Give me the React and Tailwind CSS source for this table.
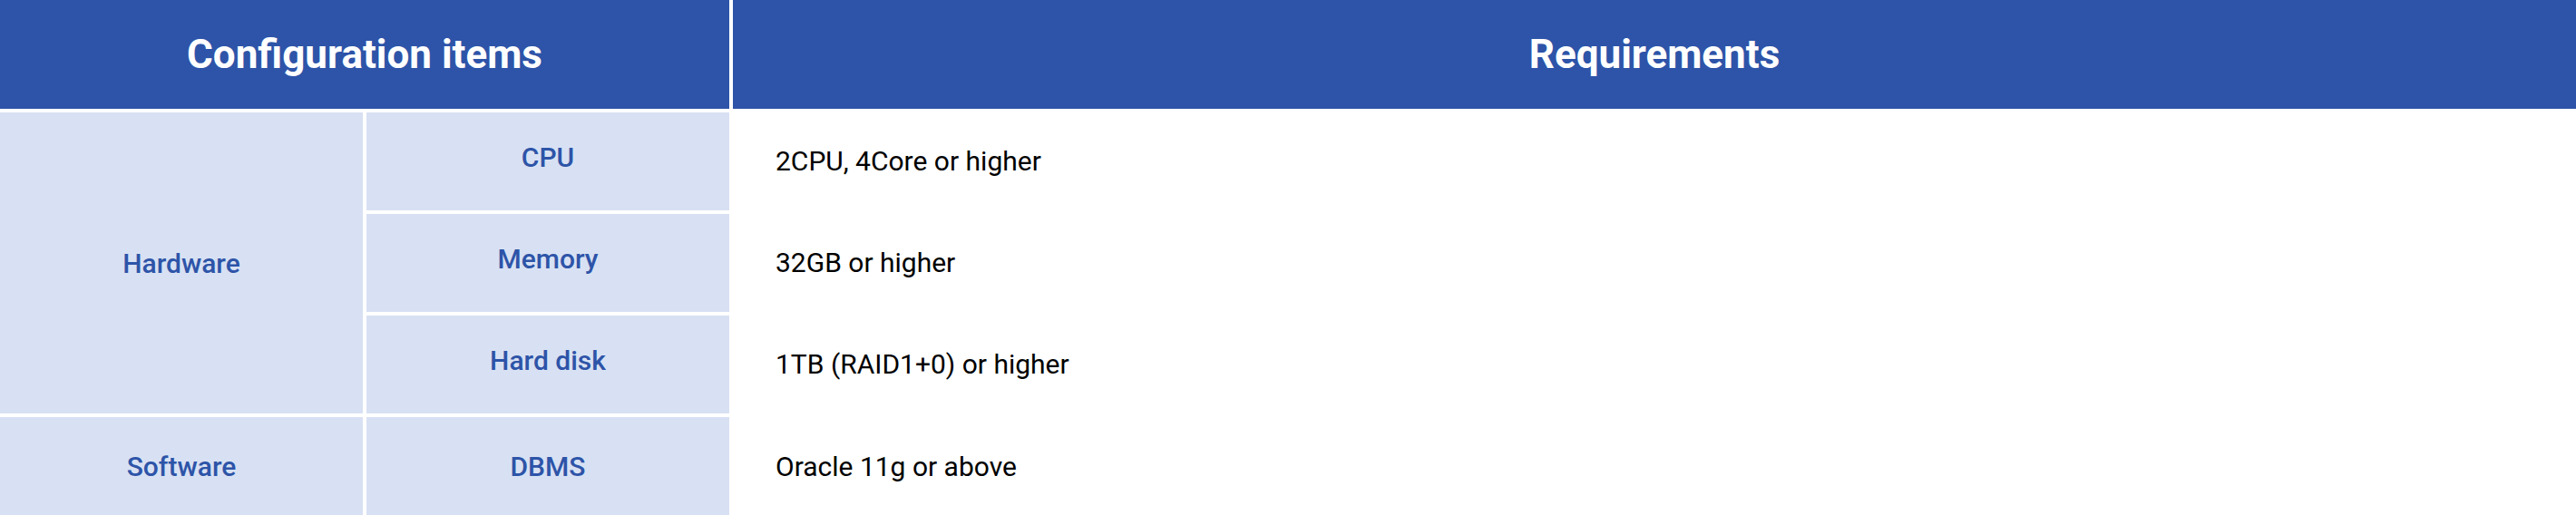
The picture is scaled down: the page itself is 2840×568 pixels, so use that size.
import React from 'react'

const rows = [
    { item: 'CPU', req: '2CPU, 4Core or higher' },
    { item: 'Memory', req: '32GB or higher' },
    { item: 'Hard disk', req: '1TB (RAID1+0) or higher' },
]

export default function App() {
    return (
        <main className="w-[2840px] h-[568px] bg-white font-['Roboto','Liberation_Sans',sans-serif]">
            <div className="grid grid-cols-[400px_400px_1fr] grid-rows-[120px_108px_108px_108px_108px] gap-[4px]">
                <div className="col-span-2 bg-[#2d54a8] flex items-center justify-center text-white text-[44px] font-bold">
                    Configuration items
                </div>
                <div className="bg-[#2d54a8] flex items-center justify-center text-white text-[44px] font-bold">
                    Requirements
                </div>

                <div className="row-span-3 bg-[#d8e1f3] flex items-center justify-center text-[#2d54a8] text-[30px] font-medium">
                    Hardware
                </div>
                {rows.map((r, i) => (
                    <React.Fragment key={r.item}>
                        <div className={`bg-[#d8e1f3] flex items-center justify-center text-[#2d54a8] text-[30px] font-medium pb-[10px] ${i === 0 ? 'col-start-2' : ''}`}>
                            {r.item}
                        </div>
                        <div className="flex items-center pl-[47px] text-black text-[30px] pb-[2px]">
                            {r.req}
                        </div>
                    </React.Fragment>
                ))}

                <div className="bg-[#d8e1f3] flex items-center justify-center text-[#2d54a8] text-[30px] font-medium">
                    Software
                </div>
                <div className="bg-[#d8e1f3] flex items-center justify-center text-[#2d54a8] text-[30px] font-medium">
                    DBMS
                </div>
                <div className="flex items-center pl-[47px] text-black text-[30px]">
                    Oracle 11g or above
                </div>
            </div>
        </main>
    )
}
